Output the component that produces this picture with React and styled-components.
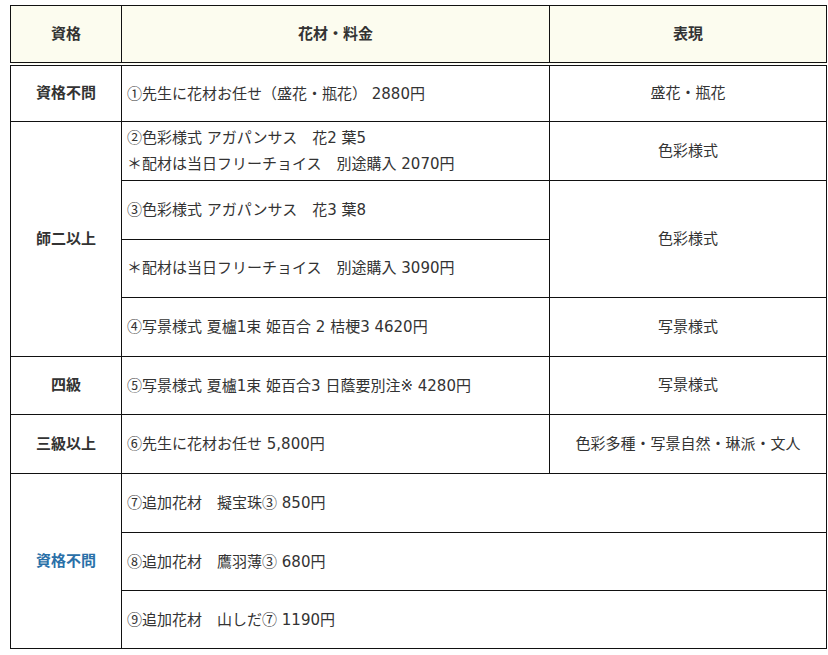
import React from 'react'
import styled, { createGlobalStyle } from 'styled-components'

const GlobalStyle = createGlobalStyle`
  body {
    margin: 0;
    background: #fff;
    font-family: "DejaVu Sans", "Noto Sans CJK JP", sans-serif;
    color: #333;
  }
`

const Page = styled.div`
  padding: 5px 0 0 10px;
`

const Table = styled.table`
  width: 816px;
  border-collapse: collapse;
  table-layout: fixed;
  font-size: 15px;
  line-height: 26px;
`

const HeadCell = styled.th`
  height: 56px;
  padding: 0 5px;
  background: #fcfcef;
  border: 1px solid #111;
  border-bottom: 4px double #111;
  font-weight: bold;
  text-align: center;
  vertical-align: middle;
`

const Row = styled.tr`
  height: ${p => p.$h || 58}px;
`

const Cell = styled.td`
  padding: 0 5px;
  border: 1px solid #111;
  vertical-align: middle;
  text-align: ${p => (p.$center ? 'center' : 'left')};
  font-weight: ${p => (p.$bold ? 'bold' : 'normal')};
  color: ${p => p.$color || '#333'};
  white-space: nowrap;
`

const Line = styled.div`
  display: block;
`

// circled numbers come from the CJK face so they are full width
const Num = styled.span`
  font-family: "Noto Sans CJK JP", sans-serif;
`

export default function App() {
  return (
    <>
      <GlobalStyle />
      <Page>
        <Table>
          <colgroup>
            <col style={{ width: 111 }} />
            <col style={{ width: 428 }} />
            <col style={{ width: 277 }} />
          </colgroup>
          <thead>
            <tr>
              <HeadCell>資格</HeadCell>
              <HeadCell>花材・料金</HeadCell>
              <HeadCell>表現</HeadCell>
            </tr>
          </thead>
          <tbody>
            <Row $h={57}>
              <Cell $center $bold>資格不問</Cell>
              <Cell><Num>①</Num>先生に花材お任せ（盛花・瓶花） 2880円</Cell>
              <Cell $center>盛花・瓶花</Cell>
            </Row>
            <Row $h={59}>
              <Cell $center $bold rowSpan={4}>師二以上</Cell>
              <Cell>
                <Line><Num>②</Num>色彩様式 アガパンサス　花2 葉5</Line>
                <Line>＊配材は当日フリーチョイス　別途購入 2070円</Line>
              </Cell>
              <Cell $center>色彩様式</Cell>
            </Row>
            <Row $h={59}>
              <Cell><Num>③</Num>色彩様式 アガパンサス　花3 葉8</Cell>
              <Cell $center rowSpan={2}>色彩様式</Cell>
            </Row>
            <Row $h={58}>
              <Cell>＊配材は当日フリーチョイス　別途購入 3090円</Cell>
            </Row>
            <Row $h={59}>
              <Cell><Num>④</Num>写景様式 夏櫨1束 姫百合 2 桔梗3 4620円</Cell>
              <Cell $center>写景様式</Cell>
            </Row>
            <Row $h={58}>
              <Cell $center $bold>四級</Cell>
              <Cell><Num>⑤</Num>写景様式 夏櫨1束 姫百合3 日蔭要別注※ 4280円</Cell>
              <Cell $center>写景様式</Cell>
            </Row>
            <Row $h={59}>
              <Cell $center $bold>三級以上</Cell>
              <Cell><Num>⑥</Num>先生に花材お任せ 5,800円</Cell>
              <Cell $center>色彩多種・写景自然・琳派・文人</Cell>
            </Row>
            <Row $h={59}>
              <Cell $center $bold $color="#2a70a8" rowSpan={3}>資格不問</Cell>
              <Cell colSpan={2}><Num>⑦</Num>追加花材　擬宝珠<Num>③</Num> 850円</Cell>
            </Row>
            <Row $h={58}>
              <Cell colSpan={2}><Num>⑧</Num>追加花材　鷹羽薄<Num>③</Num> 680円</Cell>
            </Row>
            <Row $h={58}>
              <Cell colSpan={2}><Num>⑨</Num>追加花材　山しだ<Num>⑦</Num> 1190円</Cell>
            </Row>
          </tbody>
        </Table>
      </Page>
    </>
  )
}
